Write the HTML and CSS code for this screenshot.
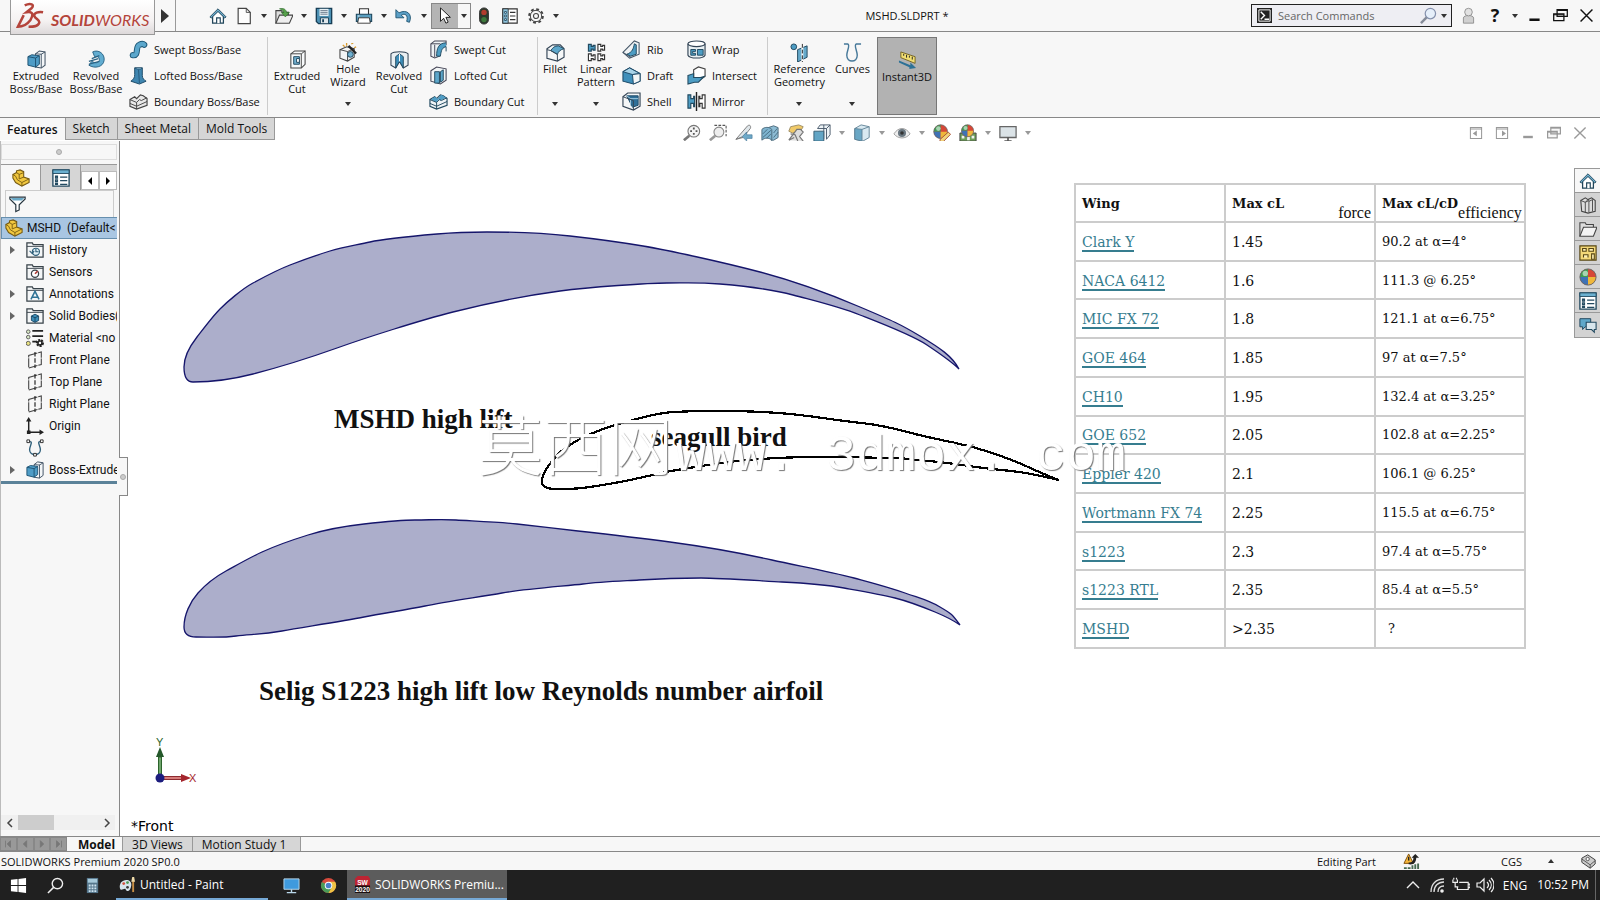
FILE: index.html
```html
<!DOCTYPE html>
<html lang="en">
<head>
<meta charset="utf-8">
<title>MSHD.SLDPRT</title>
<link rel="stylesheet" href="styles.css">
</head>
<body>
<svg class="sprite" aria-hidden="true">
  <symbol id="home" viewBox="0 0 20 20"><path d="M4 10v8h12v-8L10 4z" fill="#fff" stroke="#20455a" stroke-width="1.400"/><path d="M1 11 10 2l9 9-1.500 1.200L10 5l-7.500 7.200z" fill="#6fb0cf" stroke="#20455a"/><path d="M8.500 18v-6h4v6" fill="#fff" stroke="#20455a" stroke-width="1.300"/></symbol>
  <symbol id="new" viewBox="0 0 20 20"><path d="M3.500 1.500h9l4.500 4.500v12.500h-13.500z" fill="#fdfdfd" stroke="#444" stroke-width="1.300"/><path d="M12.500 1.500v4.500h4.500" fill="none" stroke="#444"/></symbol>
  <symbol id="open" viewBox="0 0 20 20"><path d="M1 18V4h6l1.500 2H15v3" fill="#ddd" stroke="#444" stroke-width="1.200"/><path d="M1 18 5 9h15l-4 9z" fill="#eee" stroke="#444" stroke-width="1.200"/><path d="M5 2c4-1 7 0 8 4h3l-4.500 5L7 6h3C9 4 8 3 5 2z" fill="#57a04b" stroke="#2d6a2a" stroke-width=".7"/></symbol>
  <symbol id="save" viewBox="0 0 20 20"><path d="M1.500 1.500h17v17H4l-2.500-2.500z" fill="#4e92b5" stroke="#173d55" stroke-width="1.500"/><path d="M5 2h10v8H5z" fill="#e6f0f5"/><path d="M6 4h8M6 6h8M6 8h8" stroke="#678"/><path d="M6 18v-6h9v6" fill="#dfe6ea" stroke="#173d55"/><path d="M8 13.500h2V17H8z" fill="#173d55"/></symbol>
  <symbol id="print" viewBox="0 0 20 20"><path d="M5 8V2h10v6" fill="#fff" stroke="#333" stroke-width="1.200"/><path d="M1.500 8h17v8h-17z" fill="#5b9fc0" stroke="#1d465d" stroke-width="1.200"/><path d="M4 12h12l1 6H3z" fill="#fff" stroke="#333"/><path d="M3 10h2" stroke="#fff"/></symbol>
  <symbol id="undo" viewBox="0 0 20 20"><path d="M1 3v9h9L7 9c4-2.500 8 0 6 7l3 1C20 8 13 2 4.500 6.500z" fill="#5b9fc6" stroke="#1e526f"/></symbol>
  <symbol id="cursor" viewBox="0 0 20 20"><path d="M5 1v15l3.500-3.500L11 18l2.500-1.200L11 11.500h5z" fill="#fff" stroke="#222" stroke-width="1.100"/></symbol>
  <symbol id="light" viewBox="0 0 20 20"><rect x="5" y="1" width="10" height="18" rx="5" fill="#2d3a2d" stroke="#333"/><circle cx="10" cy="6" r="3" fill="#b23c2d"/><circle cx="10" cy="14" r="3" fill="#3d7a3c"/></symbol>
  <symbol id="options" viewBox="0 0 20 20"><path d="M2 2h16v16H2z" fill="#fff" stroke="#333" stroke-width="1.300"/><path d="M2 2h6v16H2z" fill="#8cc3dc" stroke="#333"/><path d="M4 5h2v2H4zM4 9h2v2H4zM4 13h2v2H4z" fill="#fff" stroke="#24506a"/><path d="M10 6h6M10 10h6M10 14h6" stroke="#333" stroke-width="1.200"/></symbol>
  <symbol id="gear" viewBox="0 0 20 20"><circle cx="10" cy="10" r="7.600" fill="none" stroke="#444" stroke-width="2.200" stroke-dasharray="3.200 2.770"/><circle cx="10" cy="10" r="6.300" fill="#f7f7f7" stroke="#444" stroke-width="1.100"/><circle cx="10" cy="10" r="2.800" fill="none" stroke="#444" stroke-width="1.200"/></symbol>
  <symbol id="extrude" viewBox="0 0 20 20"><path d="M9 4l4-3 6 1v14l-4 3-6-1z" fill="#f3f6f8" stroke="#456" stroke-width="1.100"/><path d="M15 4v15M9 4l6 .5 4-2.500" fill="none" stroke="#456"/><path d="M1 7l4-2 8 1v9l-4 3-8-2z" fill="#4e9cc6" stroke="#1c5070"/><path d="M1 7l8 1.500V18M9 8.500l4-2.500" fill="none" stroke="#1c5070"/></symbol>
  <symbol id="revolve" viewBox="0 0 20 20"><path d="M6 2C12-1 19 4 18 11c-1 7-10 9-16 5l3-4c4 2 7 2 8-1 .5-3-2-5-5-4z" fill="#62add1" stroke="#2a6384"/><path d="M2 12l10-3M2 15l11-3M5 9l8-3" stroke="#2a6384" stroke-width="1.300"/></symbol>
  <symbol id="swept" viewBox="0 0 20 20"><path d="M4 16c7 1 2-9 7-11 2-1 4-1 5 0" fill="none" stroke="#1e5877" stroke-width="6.500" stroke-linecap="round"/><path d="M4 16c7 1 2-9 7-11 2-1 4-1 5 0" fill="none" stroke="#5ba7cc" stroke-width="4.500" stroke-linecap="round"/></symbol>
  <symbol id="loft" viewBox="0 0 20 20"><path d="M6 2h8v8c0 3 2 5 4 6l-7 3-9-3c3-2 4-4 4-7z" fill="#3f86b0" stroke="#1c4966"/><path d="M6 2l3 1.500h3L14 2zM10 4l1 14" fill="#92c4de" stroke="#1c4966" stroke-width=".7"/></symbol>
  <symbol id="boundary" viewBox="0 0 20 20"><path d="M1 8l5-3 2 2 4-4 3 1 4 3v7L8 18l-7-3z" fill="#e8e8e8" stroke="#444" stroke-width="1.200"/><path d="M1 8l7 3 3-3 2 1 6-3M8 11v7M1 12l7 3 11-5" fill="none" stroke="#444"/></symbol>
  <symbol id="boundcut" viewBox="0 0 20 20"><path d="M1 8l5-3 2 2 4-4 3 1 4 3v7L8 18l-7-3z" fill="#eef3f6" stroke="#234a60" stroke-width="1.200"/><path d="M2 8l4-3 3 2 4-4 5 3-6 3-2-1-2 3z" fill="#4f9dc5"/><path d="M1 8l7 3 3-3 2 1 6-3M8 11v7M1 12l7 3 11-5" fill="none" stroke="#234a60"/></symbol>
  <symbol id="excut" viewBox="0 0 20 20"><path d="M3 4l4-3h11v14l-4 4H3z" fill="#f8fafb" stroke="#444" stroke-width="1.100"/><path d="M3 4h11v15M14 4l4-3" fill="none" stroke="#444"/><path d="M6 7h6v8H6z" fill="#71b0d0" stroke="#234a60"/><path d="M9 9h3v4H9z" fill="#fff" stroke="#234a60"/></symbol>
  <symbol id="hole" viewBox="0 0 20 20"><path d="M1 7l7-3 8 2v9l-7 4-8-3z" fill="#f2f4f5" stroke="#444" stroke-width="1.100"/><path d="M1 7l8 2v10M9 9l7-3" fill="none" stroke="#444"/><circle cx="12" cy="12" r="3" fill="#6fb0d0" stroke="#234a60"/><path d="M10 3l8 8" stroke="#222" stroke-width="2.400"/><path d="M4 2l2 2M8 0v3M13 1l2-1M18 4l-2 1" stroke="#d89b2e" stroke-width="1.400"/></symbol>
  <symbol id="revcut" viewBox="0 0 20 20"><path d="M1 4c3-3 15-3 18 0v12l-5 3-4-7-4 7-5-3z" fill="#e9eff2" stroke="#345" stroke-width="1.100"/><path d="M6 19V7l4-3 4 3v12l-4-7z" fill="#3f8fba" stroke="#234a60"/><path d="M10 4v8" stroke="#fff"/></symbol>
  <symbol id="sweepcut" viewBox="0 0 20 20"><path d="M2 4l4-3h12v4c-5 1-7 5-7 12l-5 2-4-2z" fill="#eef2f4" stroke="#445" stroke-width="1.100"/><path d="M18 3c-8 0-10 6-10 14h4c1-7 2-9 6-10v5" fill="#4d9dc4" stroke="#234a60"/><path d="M2 4h10M6 5v13" stroke="#445"/></symbol>
  <symbol id="loftcut" viewBox="0 0 20 20"><path d="M2 5l6-4 10 2v12l-6 4-10-3z" fill="#f2f5f6" stroke="#445" stroke-width="1.100"/><path d="M6 6h5v12H6zM12 6l3-2v11l-3 2z" fill="#5ca7cb" stroke="#234a60"/></symbol>
  <symbol id="fillet" viewBox="0 0 20 20"><path d="M1 6l6-4h8l4 4v9l-7 4-11-3z" fill="#f5f7f8" stroke="#345" stroke-width="1.200"/><path d="M5 8c2-3 4-5 8-5l6 3c-4 1-6 3-7 6z" fill="#5da7cb" stroke="#234a60"/><path d="M1 7l4 1 7 4v7" fill="none" stroke="#345"/></symbol>
  <symbol id="pattern" viewBox="0 0 20 20"><path d="M1.500 1.500h3v2h2v-1h2v5h-2v-1h-2v2h-3z" fill="#4d9dc4" stroke="#234a60" stroke-width="1.200"/><path d="M11.500 1.500h3v2h2v-1h2v5h-2v-1h-2v2h-3zM1.500 11.500h3v2h2v-1h2v5h-2v-1h-2v2h-3zM11.500 11.500h3v2h2v-1h2v5h-2v-1h-2v2h-3z" fill="#fff" stroke="#333" stroke-width="1.200"/></symbol>
  <symbol id="rib" viewBox="0 0 20 20"><path d="M1 13L13 1l5 2v12l-10 4z" fill="#f0f3f5" stroke="#456" stroke-width="1.100"/><path d="M5 15C11 13 12 9 13 4l2 1v10l-6 2z" fill="#4d9dc4" stroke="#234a60"/><path d="M1 13l8 5" stroke="#456"/></symbol>
  <symbol id="draft" viewBox="0 0 20 20"><path d="M1 6l7-4 11 6v8l-7 3-11-3z" fill="#3f8fba" stroke="#1c4966" stroke-width="1.100"/><path d="M1 6l10 3 8-1L8 2z" fill="#a8d3e8" stroke="#1c4966"/><path d="M11 9l8-1v8l-7 3z" fill="#f3f6f7" stroke="#1c4966"/></symbol>
  <symbol id="shell" viewBox="0 0 20 20"><path d="M1 5l5-4h13v14l-7 4-11-4z" fill="#f4f6f7" stroke="#345" stroke-width="1.200"/><path d="M5 4h12v10l-6 2z" fill="#2f7099" stroke="#1c4966"/><path d="M5 4l4 3v7l2 2M9 7h8" fill="none" stroke="#a4cce0"/><path d="M1 5l11 4v10" fill="none" stroke="#345"/></symbol>
  <symbol id="wrap" viewBox="0 0 20 20"><path d="M1 4v12c2 4 16 4 18 0V4" fill="#e9f0f3" stroke="#345" stroke-width="1.200"/><ellipse cx="10" cy="4" rx="9" ry="3" fill="#fff" stroke="#345" stroke-width="1.200"/><path d="M4 10h5v2H6v2h3v2H4zM11 10h6v6h-6z" fill="#4d9dc4" stroke="#234a60"/></symbol>
  <symbol id="intersect" viewBox="0 0 20 20"><path d="M7 4l5-3 7 2v8l-5 3-7-2z" fill="#fff" stroke="#444" stroke-width="1.200"/><path d="M1 10l6-2v4h7l4-1-6 6H8l-7 2z" fill="#4d9dc4" stroke="#234a60" stroke-width="1.100"/></symbol>
  <symbol id="mirror" viewBox="0 0 20 20"><path d="M1 3h3v4h3V4.500h1v11H7V12H4v5H1z" fill="#4d9dc4" stroke="#234a60" stroke-width="1.200"/><path d="M10 0v20" stroke="#222" stroke-width="1.500"/><path d="M19 3h-3v4h-2.500V4.500h-1v11h1V12H16v5h3z" fill="#fff" stroke="#333" stroke-width="1.200"/></symbol>
  <symbol id="refgeo" viewBox="0 0 20 20"><circle cx="4" cy="4" r="3" fill="#4d9dc4" stroke="#234a60"/><path d="M8 7l10-4v12l-10 5z" fill="#66aacb" stroke="#234a60"/><path d="M13 1v19" stroke="#fff" stroke-width="2"/><path d="M13 1v19" stroke="#222" stroke-dasharray="4 2"/></symbol>
  <symbol id="curves" viewBox="0 0 20 20"><path d="M1 1h4c3 1-1 7-1 12 0 8 11 8 11 0 0-5-4-11-1-12h5" fill="none" stroke="#47799a" stroke-width="1.500"/></symbol>
  <symbol id="instant" viewBox="0 0 20 20"><path d="M3 1l15 5v7L3 7z" fill="#f2de72" stroke="#766525"/><path d="M6 3v2M9 4v3M12 5v2M15 6v3" stroke="#222"/><path d="M1 10l12 5v-3l6 6-7 1v-2L1 12z" fill="#2d7196"/></symbol>
  <symbol id="zoomfit" viewBox="0 0 20 20"><circle cx="12" cy="8" r="6.500" fill="#f4f4f4" stroke="#777" stroke-width="1.200"/><path d="M7 13l-6 5" stroke="#777" stroke-width="3"/><path d="M12 4v2M12 10v2M8 8h2M14 8h2" stroke="#555" stroke-width="2"/></symbol>
  <symbol id="zoomarea" viewBox="0 0 20 20"><path d="M6 1.500h13v12" fill="none" stroke="#555" stroke-dasharray="3 1.500" stroke-width="1.200"/><circle cx="11" cy="9" r="5.500" fill="#eee" stroke="#888" stroke-width="1.200"/><path d="M7 13l-6 5" stroke="#999" stroke-width="3"/></symbol>
  <symbol id="prev" viewBox="0 0 20 20"><path d="M1 17L14 2c3-2 4 1 3 3L9 15z" fill="#dfe6ea" stroke="#777"/><path d="M1 17l8-3 4-5" fill="none" stroke="#777"/><path d="M8 14l5-5v3h6v4h-6v3z" fill="#6da9c8" stroke="#47799a" stroke-width=".7"/></symbol>
  <symbol id="section" viewBox="0 0 20 20"><path d="M8 4l6-2 5 2v11l-5 3h-3" fill="#8dbcd4" stroke="#4b6878"/><path d="M1 6c3-3 8-3 11 0v12c-3-3-8-3-11 0z" fill="#7fb4cf" stroke="#4b6878"/><path d="M2 15l9-8M2 11l5-5M6 16l5-5M14 15l5-6M14 10l4-5" stroke="#35566a" stroke-width=".8"/></symbol>
  <symbol id="dynview" viewBox="0 0 20 20"><path d="M4 3l9-2 5 2-3 5-9 2-4-2z" fill="#f1ca68" stroke="#9a8a62"/><path d="M2 18L11 6h4l3 3-4 5 4 5M4 11l5 1 3 7M2 18l6-3" fill="#ddd" stroke="#777" stroke-width="1.300"/></symbol>
  <symbol id="orient" viewBox="0 0 20 20"><path d="M5 5h10v12M5 5l3-4h11v11l-4 5M15 5l4-4M12 1v16" fill="#eef4f7" stroke="#456"/><path d="M1 8h11v11H1z" fill="#62a5c5" stroke="#365b70"/></symbol>
  <symbol id="cube" viewBox="0 0 20 20"><path d="M2 5l7-4 9 2v12l-7 4-9-2z" fill="#d8e9f1" stroke="#5e8094"/><path d="M2 5l8 1v13l-8-2z" fill="#69a7c5" stroke="#5e8094"/><path d="M10 6l8-3" stroke="#5e8094"/></symbol>
  <symbol id="eye" viewBox="0 0 20 20"><path d="M1 11c5-8 13-8 18 0-5 6-13 6-18 0z" fill="#eee" stroke="#999"/><circle cx="10" cy="10" r="4.500" fill="#6a7780"/><circle cx="10" cy="10" r="2" fill="#333"/></symbol>
  <symbol id="ball" viewBox="0 0 20 20"><circle cx="10" cy="10" r="9" fill="#d64737"/><path d="M10 10V1a9 9 0 0 0-9 9z" fill="#3f9d54"/><path d="M10 10H1a9 9 0 0 0 9 9z" fill="#3f72b5"/><path d="M10 10v9a9 9 0 0 0 9-9z" fill="#efb73b"/><circle cx="10" cy="10" r="9" fill="none" stroke="#666"/><circle cx="7" cy="6" r="3" fill="#fff" opacity=".55"/></symbol>
  <symbol id="appear" viewBox="0 0 20 20"><use href="#ball" width="17" height="17"/><path d="M8 17l9-8 2.500 2.500-8 8-4 .5z" fill="#f1d47a" stroke="#a54b32"/></symbol>
  <symbol id="scene" viewBox="0 0 20 20"><path d="M1 10h18v9H1z" fill="#6b9d56" stroke="#444"/><path d="M3 13h3v3H3zM9 14h3v4H9zM14 13h3v3h-3z" fill="#eee"/><use href="#ball" x="2" width="15" height="15"/></symbol>
  <symbol id="screen" viewBox="0 0 20 20"><path d="M1 3h18v12H1z" fill="#dbe3e7" stroke="#666" stroke-width="1.400"/><path d="M10 15v3M6 19h8" stroke="#555" stroke-width="1.800"/></symbol>
  <symbol id="part" viewBox="0 0 20 20"><path d="M1 6l4-2v-2l4-1 4 2v6l6 2v4l-8 4-7-4-3-5z" fill="#f2c83f" stroke="#765b13" stroke-width="1.200"/><path d="M1 6l3 2 2 4 5 3 8-4M5 4l3 2 5-2M8 6v5l5-2M11 15v4" fill="none" stroke="#765b13"/></symbol>
  <symbol id="props" viewBox="0 0 20 20"><path d="M1 1h18v18H1z" fill="#fff" stroke="#234a60" stroke-width="1.500"/><path d="M1 1h18v4H1z" fill="#6bb0d0" stroke="#234a60"/><path d="M4 8h2v2H4zM4 12h2v2H4zM4 16h2v1H4z" fill="none" stroke="#234a60" stroke-width="1.500"/><path d="M9 9h8M9 13h8M9 17h8" stroke="#234a60" stroke-width="1.400"/></symbol>
  <symbol id="filter" viewBox="0 0 20 20"><path d="M1 2h18v2l-7 7v6l-4 2v-8L1 4z" fill="#fff" stroke="#26353f" stroke-width="1.400"/><path d="M2 3h16l-3 3H5z" fill="#6aa9c7"/></symbol>
  <symbol id="folder" viewBox="0 0 20 20"><path d="M1 18V2h6l1 2h11v14z" fill="#f4f6f7" stroke="#39434a" stroke-width="1.400"/><path d="M1 6h18" stroke="#39434a"/></symbol>
  <symbol id="history" viewBox="0 0 20 20"><use href="#folder"/><circle cx="11" cy="12" r="4" fill="#e2f0f7" stroke="#2d5d78" stroke-width="1.200"/><path d="M11 9v3h3M4 11l3 3 2-3" fill="none" stroke="#2d5d78" stroke-width="1.200"/></symbol>
  <symbol id="sensor" viewBox="0 0 20 20"><use href="#folder"/><circle cx="10" cy="12" r="4" fill="#fff" stroke="#39434a" stroke-width="1.400"/><path d="M10 12l3-3" stroke="#b13b35" stroke-width="1.700"/></symbol>
  <symbol id="annot" viewBox="0 0 20 20"><use href="#folder"/><path d="M5.500 16L10 7l4.500 9M7 13.500h6" fill="none" stroke="#2f7396" stroke-width="1.700"/></symbol>
  <symbol id="bodies" viewBox="0 0 20 20"><use href="#folder"/><path d="M6 10l4-2 4 2v5l-4 2-4-2z" fill="#3c8db7" stroke="#194663"/><path d="M6 10l4 2 4-2M10 12v5" fill="none" stroke="#194663"/></symbol>
  <symbol id="material" viewBox="0 0 20 20"><g fill="#d8e8c5" stroke="#555"><circle cx="2.500" cy="3" r="2"/><circle cx="2.500" cy="9" r="2"/><circle cx="2.500" cy="16" r="2.300" fill="#e9e27f"/></g><path d="M7 2h12M7 8h12M7 14h5" stroke="#222" stroke-width="2"/><circle cx="15.500" cy="15.500" r="3" fill="none" stroke="#222" stroke-width="3" stroke-dasharray="2 1"/><circle cx="15.500" cy="15.500" r="2.300" fill="none" stroke="#222" stroke-width="1.600"/></symbol>
  <symbol id="plane" viewBox="0 0 20 20"><path d="M3 5l14-4v14L3 19z" fill="none" stroke="#444" stroke-width="1.200" stroke-dasharray="10 1"/><path d="M10 1v18" stroke="#222" stroke-width="1.300" stroke-dasharray="5 2"/></symbol>
  <symbol id="origin" viewBox="0 0 20 20"><path d="M3 17V4M3 17h14" stroke="#222" stroke-width="1.600"/><path d="M3 0l3 5H0zM20 17l-5-3v6zM1 15h4v4H1z" fill="#222"/></symbol>
  <symbol id="sketch" viewBox="0 0 20 20"><path d="M3 3c6-1 1 4 1 9 0 7 12 7 12 0 0-5-5-10 1-9" fill="none" stroke="#31617c" stroke-width="1.500"/><path d="M1 1h3v3H1zM16 1h3v3h-3zM8.500 16h3v3h-3z" fill="#fff" stroke="#222"/></symbol>
  <symbol id="library" viewBox="0 0 20 20"><path d="M2 5l5-3 3 2 4-2 4 3v12l-8 2-7-2z" fill="#ddd" stroke="#444" stroke-width="1.200"/><path d="M2 5l5 2 3-3M7 7v11M7 7l4-2M11 5v13M11 6l4-2M15 4v13" fill="none" stroke="#444"/></symbol>
  <symbol id="folder2" viewBox="0 0 20 20"><path d="M1 18V3h6l1 2h8v3" fill="#ddd" stroke="#444" stroke-width="1.200"/><path d="M1 18L5 8h15l-4 10z" fill="#f4f4f4" stroke="#444" stroke-width="1.200"/></symbol>
  <symbol id="palette" viewBox="0 0 20 20"><path d="M1 2h18v16H1z" fill="#f3d878" stroke="#554514" stroke-width="1.300"/><path d="M4 5h4v3H4zM11 5h5v3h-5zM5 15v-3h5v3M14 11h3v6h-3z" fill="#fff1b5" stroke="#554514" stroke-width="1.200"/></symbol>
  <symbol id="forum" viewBox="0 0 20 20"><path d="M1 3h12v9H7l-3 3v-3H1z" fill="#5fa8ca" stroke="#234a60" stroke-width="1.100"/><path d="M8 7h11v8h-2v3l-3-3H8z" fill="#d8e6ed" stroke="#234a60" stroke-width="1.200"/></symbol>
  <symbol id="restore" viewBox="0 0 20 20"><path d="M6 3h12v8H6zM2 8h12v8H2z" fill="#f7f7f7" stroke="currentColor" stroke-width="1.500"/><path d="M6 4h12M2 9h12" stroke="currentColor" stroke-width="1.200"/></symbol>
  <symbol id="close" viewBox="0 0 20 20"><path d="M3 3l14 14M17 3L3 17" stroke="currentColor" stroke-width="1.700"/></symbol>
  <symbol id="min" viewBox="0 0 20 20"><path d="M4 15h12" stroke="currentColor" stroke-width="3"/></symbol>
</svg>

<div class="app">
  <header class="titlebar">
    <div class="logo">
      <svg class="logo-mark" viewBox="0 0 30 30" aria-hidden="true"><path d="M9 3c6-3 11-1 7 3l-5 4c7-1 7 3 4 8-3 4-7 7-13 7l6-12M28 10c-5-1-10 1-9 4 1 3 6 4 5 7-1 4-6 4-11 4" fill="none" stroke="#b4443b" stroke-width="2.600"/></svg>
      <span class="logo-text"><b>SOLID</b>WORKS</span>
    </div>
    <button class="expand" aria-label="Show menus"><svg viewBox="0 0 8 14"><path d="M0 0l8 7-8 7z" fill="#333"/></svg></button>
    <nav class="quick" aria-label="Quick access">
      <button class="tool" aria-label="Home"><svg><use href="#home"/></svg></button>
      <button class="tool" aria-label="New"><svg><use href="#new"/></svg></button><button class="drop" aria-label="New options"></button>
      <button class="tool" aria-label="Open"><svg><use href="#open"/></svg></button><button class="drop" aria-label="Open options"></button>
      <button class="tool" aria-label="Save"><svg><use href="#save"/></svg></button><button class="drop" aria-label="Save options"></button>
      <button class="tool" aria-label="Print"><svg><use href="#print"/></svg></button><button class="drop" aria-label="Print options"></button>
      <button class="tool" aria-label="Undo"><svg><use href="#undo"/></svg></button><button class="drop" aria-label="Undo options"></button>
      <span class="split"><button class="tool pressed" aria-label="Select"><svg><use href="#cursor"/></svg></button><button class="drop" aria-label="Select options"></button></span>
      <button class="tool" aria-label="Rebuild"><svg><use href="#light"/></svg></button>
      <button class="tool" aria-label="File properties"><svg><use href="#options"/></svg></button>
      <button class="tool" aria-label="Options"><svg><use href="#gear"/></svg></button><button class="drop" aria-label="More options"></button>
    </nav>
    <h1 class="doc-title">MSHD.SLDPRT *</h1>
    <div class="search">
      <svg class="prompt" viewBox="0 0 16 16"><path d="M0 0h16v16H0z" fill="#222"/><path d="M2 2h12v12H2z" fill="none" stroke="#fff"/><path d="M4 4l4 4-4 4M8 12h5" fill="none" stroke="#fff" stroke-width="1.500"/></svg>
      <input type="text" placeholder="Search Commands" aria-label="Search Commands">
      <svg class="lens" viewBox="0 0 18 18"><circle cx="11" cy="7" r="5.500" fill="#e6effa" stroke="#8591ad" stroke-width="1.300"/><path d="M7 11l-6 6" stroke="#858b98" stroke-width="2.600"/></svg>
      <button class="drop" aria-label="Search scope"></button>
    </div>
    <div class="window-tools">
      <button class="tool" aria-label="Account"><svg viewBox="0 0 20 20"><path d="M4 19v-6c0-4 12-4 12 0v6z" fill="#d0d0d0" stroke="#888"/><circle cx="10" cy="6" r="4.500" fill="#e2e2e2" stroke="#888"/></svg></button>
      <button class="tool help">?</button><button class="drop" aria-label="Help options"></button>
      <button class="tool" aria-label="Minimize"><svg><use href="#min"/></svg></button>
      <button class="tool" aria-label="Restore"><svg><use href="#restore"/></svg></button>
      <button class="tool" aria-label="Close"><svg><use href="#close"/></svg></button>
    </div>
  </header>

  <div class="ribbon">
    <section class="group boss">
      <button class="big low w60"><svg><use href="#extrude"/></svg>Extruded Boss/Base</button>
      <button class="big low w60"><svg><use href="#revolve"/></svg>Revolved Boss/Base</button>
      <div class="stack">
        <button><svg><use href="#swept"/></svg>Swept Boss/Base</button>
        <button><svg><use href="#loft"/></svg>Lofted Boss/Base</button>
        <button><svg><use href="#boundary"/></svg>Boundary Boss/Base</button>
      </div>
    </section>
    <section class="group cuts">
      <button class="big low w54"><svg><use href="#excut"/></svg>Extruded Cut</button>
      <button class="big w48"><svg><use href="#hole"/></svg>Hole Wizard<i class="caret"></i></button>
      <button class="big low w54"><svg><use href="#revcut"/></svg>Revolved Cut</button>
      <div class="stack">
        <button><svg><use href="#sweepcut"/></svg>Swept Cut</button>
        <button><svg><use href="#loftcut"/></svg>Lofted Cut</button>
        <button><svg><use href="#boundcut"/></svg>Boundary Cut</button>
      </div>
    </section>
    <section class="group mods">
      <button class="big w34"><svg><use href="#fillet"/></svg>Fillet<i class="caret"></i></button>
      <button class="big w48"><svg><use href="#pattern"/></svg>Linear Pattern<i class="caret"></i></button>
      <div class="stack narrow">
        <button><svg><use href="#rib"/></svg>Rib</button>
        <button><svg><use href="#draft"/></svg>Draft</button>
        <button><svg><use href="#shell"/></svg>Shell</button>
      </div>
      <div class="stack">
        <button><svg><use href="#wrap"/></svg>Wrap</button>
        <button><svg><use href="#intersect"/></svg>Intersect</button>
        <button><svg><use href="#mirror"/></svg>Mirror</button>
      </div>
    </section>
    <section class="group refs">
      <button class="big w60"><svg><use href="#refgeo"/></svg>Reference Geometry<i class="caret"></i></button>
      <button class="big w48"><svg><use href="#curves"/></svg>Curves<i class="caret"></i></button>
    </section>
    <button class="big low instant w60"><svg><use href="#instant"/></svg>Instant3D</button>
  </div>

  <div class="strip">
    <nav class="tabs">
      <button class="tab active">Features</button><button class="tab">Sketch</button><button class="tab">Sheet Metal</button><button class="tab">Mold Tools</button>
    </nav>
    <div class="viewbar">
      <button class="tool" aria-label="Zoom to fit"><svg><use href="#zoomfit"/></svg></button>
      <button class="tool" aria-label="Zoom to area"><svg><use href="#zoomarea"/></svg></button>
      <button class="tool" aria-label="Previous view"><svg><use href="#prev"/></svg></button>
      <button class="tool" aria-label="Section view"><svg><use href="#section"/></svg></button>
      <button class="tool" aria-label="Dynamic annotation views"><svg><use href="#dynview"/></svg></button>
      <button class="tool" aria-label="View orientation"><svg><use href="#orient"/></svg></button><button class="drop" aria-label="Orientations"></button>
      <button class="tool" aria-label="Display style"><svg><use href="#cube"/></svg></button><button class="drop" aria-label="Display styles"></button>
      <button class="tool" aria-label="Hide or show items"><svg><use href="#eye"/></svg></button><button class="drop" aria-label="Item types"></button>
      <button class="tool" aria-label="Edit appearance"><svg><use href="#appear"/></svg></button>
      <button class="tool" aria-label="Apply scene"><svg><use href="#scene"/></svg></button><button class="drop" aria-label="Scenes"></button>
      <button class="tool" aria-label="View settings"><svg><use href="#screen"/></svg></button><button class="drop" aria-label="Settings list"></button>
    </div>
    <div class="doc-tools">
      <button class="tool" aria-label="Collapse left"><svg viewBox="0 0 20 20"><path d="M3 3h14v14H3zM3 5h14" fill="none" stroke="currentColor" stroke-width="1.300"/><path d="M11 7v7l-5-3.500z" fill="currentColor"/></svg></button>
      <button class="tool" aria-label="Collapse right"><svg viewBox="0 0 20 20"><path d="M3 3h14v14H3zM3 5h14" fill="none" stroke="currentColor" stroke-width="1.300"/><path d="M10 7v7l5-3.500z" fill="currentColor"/></svg></button>
      <button class="tool" aria-label="Minimize document"><svg><use href="#min"/></svg></button>
      <button class="tool" aria-label="Restore document"><svg><use href="#restore"/></svg></button>
      <button class="tool" aria-label="Close document"><svg><use href="#close"/></svg></button>
    </div>
  </div>

  <main class="work">
    <aside class="panel">
      <div class="grip"><i></i></div>
      <div class="ptabs">
        <button class="ptab active" aria-label="Feature tree"><svg><use href="#part"/></svg></button>
        <button class="ptab" aria-label="Properties"><svg><use href="#props"/></svg></button>
        <span class="spin"><button aria-label="Previous tab"><svg viewBox="0 0 6 8"><path d="M5 0v8L1 4z"/></svg></button><button aria-label="Next tab"><svg viewBox="0 0 6 8"><path d="M1 0v8l4-4z"/></svg></button></span>
      </div>
      <button class="filter" aria-label="Filter"><svg><use href="#filter"/></svg></button>
      <ul class="tree">
        <li class="root"><svg><use href="#part"/></svg><span>MSHD&nbsp; (Default&lt;</span></li>
        <li class="more"><svg><use href="#history"/></svg><span>History</span></li>
        <li><svg><use href="#sensor"/></svg><span>Sensors</span></li>
        <li class="more"><svg><use href="#annot"/></svg><span>Annotations</span></li>
        <li class="more"><svg><use href="#bodies"/></svg><span>Solid Bodies(</span></li>
        <li><svg><use href="#material"/></svg><span>Material &lt;no</span></li>
        <li><svg><use href="#plane"/></svg><span>Front Plane</span></li>
        <li><svg><use href="#plane"/></svg><span>Top Plane</span></li>
        <li><svg><use href="#plane"/></svg><span>Right Plane</span></li>
        <li><svg><use href="#origin"/></svg><span>Origin</span></li>
        <li><svg><use href="#sketch"/></svg></li>
        <li class="more"><svg><use href="#extrude"/></svg><span>Boss-Extrude</span></li>
      </ul>
      <div class="hscroll"><button aria-label="Scroll left"><svg viewBox="0 0 8 10"><path d="M6 1L2 5l4 4"/></svg></button><i class="thumb"></i><button aria-label="Scroll right"><svg viewBox="0 0 8 10"><path d="M2 1l4 4-4 4"/></svg></button></div>
      <div class="flyout"><i></i></div>
    </aside>

    <div class="canvas">
      <svg class="model" viewBox="120 141 1480 695" preserveAspectRatio="xMinYMin meet">
        <g class="foil">
          <path d="M184 367C184 356 190 346 197 337S213 316 220 309S242 289 253 283S277 270 290 265S317 255 330 251S357 245 370 242S414 236 437 234S470 232 487 232S543 233 570 236S619 242 643 246S722 262 760 272S827 293 860 307S900 324 920 336S952 356 959 369C952 362 942 355 927 345S883 324 860 315S815 301 793 295S744 286 720 284S685 283 667 283S590 287 560 291S485 304 453 312S365 338 337 348S280 367 253 374S210 382 193 382C187 382 184 378 184 367Z"/>
          <path d="M184 627C184 615 190 602 198 593S215 577 226 571S249 558 262 552S292 540 308 535S346 526 364 524S400 520 415 520S440 519 456 520S500 522 517 524S560 529 578 531S640 538 670 542S745 554 772 560S828 571 854 578S888 587 905 593S928 600 940 607S952 614 960 625C953 620 947 617 935 612S911 602 895 598S861 591 844 588S802 583 782 582S720 578 701 578S655 579 639 580S600 582 583 584S525 589 502 593S445 602 425 606S385 613 364 617S305 627 282 631S250 634 236 636S210 637 196 637C187 637 184 633 184 627Z"/>
        </g>
        <path class="gull" d="M542 480C543 474 545 470 549 465S557 454 564 449S577 440 586 436S602 429 612 426S625 422 633 420S650 415 664 413S700 411 720 411S770 412 790 414S823 418 837 420S864 423 876 425S900 430 915 434S958 443 976 448S1005 457 1019 463S1045 475 1059 480C1045 477 1034 474 1019 472S990 469 976 467S942 462 928 461S905 458 894 458S853 457 833 457S795 457 777 458S745 460 729 462S695 467 677 470S645 477 625 481S602 485 590 487S574 489 564 489S540 490 542 480Z"/>
        <g class="caption">
          <text x="334" y="428">MSHD high lift</text>
          <text x="651" y="446">seagull bird</text>
          <text x="259" y="700">Selig S1223 high lift low Reynolds number airfoil</text>
        </g>
        <g class="triad">
          <path d="M158.500 757h3v19h-3z" fill="#6fa56c" stroke="#2c632b"/><path d="M160 747l4 10h-8z" fill="#24582a"/>
          <path d="M163 776.500h19v3h-19z" fill="#d67c7a" stroke="#8d2b30"/><path d="M191 778l-10-4v8z" fill="#a4252d"/>
          <circle cx="160" cy="778" r="4.500" fill="#1c1c7e"/>
          <text x="156" y="746" fill="#2c632b">Y</text><text x="189" y="782" fill="#a4252d">X</text>
        </g>
        <text class="view-name" x="131" y="831">*Front</text>
      </svg>

      <table class="wings">
        <thead><tr><th>Wing</th><th><div class="head">Max cL<span>force</span></div></th><th><div class="head">Max cL/cD<span>efficiency</span></div></th></tr></thead>
        <tbody>
          <tr><td><a href="#clark-y">Clark Y</a></td><td>1.45</td><td>90.2 at α=4°</td></tr>
          <tr><td><a href="#naca-6412">NACA 6412</a></td><td>1.6</td><td>111.3 @ 6.25°</td></tr>
          <tr><td><a href="#mic-fx-72">MIC FX 72</a></td><td>1.8</td><td>121.1 at α=6.75°</td></tr>
          <tr><td><a href="#goe-464">GOE 464</a></td><td>1.85</td><td>97 at α=7.5°</td></tr>
          <tr><td><a href="#ch10">CH10</a></td><td>1.95</td><td>132.4 at α=3.25°</td></tr>
          <tr><td><a href="#goe-652">GOE 652</a></td><td>2.05</td><td>102.8 at α=2.25°</td></tr>
          <tr><td><a href="#eppler-420">Eppler 420</a></td><td>2.1</td><td>106.1 @ 6.25°</td></tr>
          <tr><td><a href="#wortmann-fx-74">Wortmann FX 74</a></td><td>2.25</td><td>115.5 at α=6.75°</td></tr>
          <tr><td><a href="#s1223">s1223</a></td><td>2.3</td><td>97.4 at α=5.75°</td></tr>
          <tr><td><a href="#s1223-rtl">s1223 RTL</a></td><td>2.35</td><td>85.4 at α=5.5°</td></tr>
          <tr><td><a href="#mshd">MSHD</a></td><td>&gt;2.35</td><td class="unknown">?</td></tr>
        </tbody>
      </table>

      <div class="watermark"><span class="wm-han">莫西网</span><span class="wm-url">www. 3dmox. com</span></div>

      <nav class="taskpane" aria-label="Task pane">
        <button class="on" aria-label="Resources"><svg><use href="#home"/></svg></button>
        <button aria-label="Design library"><svg><use href="#library"/></svg></button>
        <button aria-label="File explorer"><svg><use href="#folder2"/></svg></button>
        <button aria-label="View palette"><svg><use href="#palette"/></svg></button>
        <button aria-label="Appearances"><svg><use href="#ball"/></svg></button>
        <button aria-label="Custom properties"><svg><use href="#props"/></svg></button>
        <button aria-label="Forum"><svg><use href="#forum"/></svg></button>
      </nav>
    </div>
  </main>

  <nav class="sheets">
    <span class="steps"><button aria-label="First"><svg viewBox="0 0 12 12"><path d="M3 2v8M9 2v8L5 6z"/></svg></button><button aria-label="Previous"><svg viewBox="0 0 12 12"><path d="M8 2v8L4 6z"/></svg></button><button aria-label="Next"><svg viewBox="0 0 12 12"><path d="M4 2v8l4-4z"/></svg></button><button aria-label="Last"><svg viewBox="0 0 12 12"><path d="M9 2v8M3 2v8l4-4z"/></svg></button></span>
    <button class="sheet active">Model</button><button class="sheet">3D Views</button><button class="sheet wide">Motion Study 1</button>
  </nav>

  <footer class="status">
    <span>SOLIDWORKS Premium 2020 SP0.0</span>
    <span class="editing">Editing Part</span>
    <svg class="warn" viewBox="0 0 18 18"><path d="M1 11L6 1l5 10z" fill="#f5b73a" stroke="#80500a"/><path d="M6 4v4" stroke="#222" stroke-width="1.500"/><path d="M6 12c6 1 8-3 8-7h3l-4-4-4 4h2c0 3-1 5-5 5z" fill="#222"/><path d="M1 16h3M5 16h3M10 13v4M13 12v5M16 11v6" stroke="#486b52" stroke-width="2"/></svg>
    <button class="units">CGS<i class="caret up"></i></button>
    <svg class="tag" viewBox="0 0 18 18"><path d="M1 5l7-4 9 6v5l-6 5L1 10z" fill="#ccc" stroke="#444" stroke-width="1.200"/><path d="M1 6l10 7 6-5M11 13v4" fill="none" stroke="#444"/><circle cx="8" cy="6" r="2" fill="#fff" stroke="#444"/></svg>
  </footer>

  <div class="taskbar">
    <button class="app-icon" aria-label="Start"><svg viewBox="0 0 18 18"><path d="M1 3l7-1v6.500H1zM9 2l8-1v7.500H9zM1 9.500h7V16l-7-1zM9 9.500h8V17l-8-1z" fill="#fff"/></svg></button>
    <button class="app-icon" aria-label="Search"><svg viewBox="0 0 18 18"><circle cx="11" cy="7" r="5.500" fill="none" stroke="#eee" stroke-width="1.500"/><path d="M7 11l-6 6" stroke="#eee" stroke-width="1.600"/></svg></button>
    <button class="app-icon" aria-label="Calculator"><svg viewBox="0 0 18 18"><path d="M3 1h12v16H3z" fill="#56778c"/><path d="M4 2h10v4H4z" fill="#a6c9da"/><path d="M5 9h8M5 12h8M5 15h8" stroke="#cfe5f1" stroke-width="2" stroke-dasharray="2 1"/></svg></button>
    <button class="task paint"><svg viewBox="0 0 18 18"><path d="M2 7c4-5 12-3 11 3-1 7-5 7-6 4-1-2-5 3-6-1-.5-2 0-4 1-6z" fill="#d7e5ed"/><circle cx="5" cy="8" r="1.500" fill="#d0503d"/><circle cx="9" cy="7" r="1.500" fill="#4a9a55"/><circle cx="9" cy="12" r="1.500" fill="#3a3a3a"/><path d="M15 5v12" stroke="#c98f45" stroke-width="2"/><path d="M13 6l1-5h2l1 5z" fill="#efdba9"/></svg>Untitled - Paint</button>
    <button class="app-icon" aria-label="This PC"><svg viewBox="0 0 18 18"><path d="M1 2h16v11H1z" fill="#3f9ade" stroke="#b9d7ea"/><path d="M9 13v3M4 16.500h10" stroke="#b9d7ea" stroke-width="1.500"/></svg></button>
    <button class="app-icon" aria-label="Chrome"><svg viewBox="0 0 18 18"><circle cx="9" cy="9" r="8" fill="#d94b3d"/><path d="M9 9L2 5.200A8 8 0 0 0 9 17l4-6z" fill="#4a9c57"/><path d="M9 5h7a8 8 0 0 1-7 12l4-7z" fill="#eec244"/><circle cx="9" cy="9" r="4" fill="#fff"/><circle cx="9" cy="9" r="3" fill="#4a80c8"/></svg></button>
    <button class="task current"><svg viewBox="0 0 18 18"><path d="M1 3l3-3h11l2 3v8H1z" fill="#bd2433"/><path d="M1 10h16v8H1z" fill="#1d1010"/><text x="9" y="9" class="mini">SW</text><text x="9" y="17" class="mini">2020</text></svg>SOLIDWORKS Premiu...</button>
    <div class="tray">
      <button aria-label="Hidden icons"><svg viewBox="0 0 18 18"><path d="M3 12l6-6 6 6" fill="none" stroke="#eee" stroke-width="1.400"/></svg></button>
      <button aria-label="Network"><svg viewBox="0 0 18 18"><g fill="none" stroke="#ddd" stroke-width="1.300"><path d="M3 16C3 8 8 3 16 3M6 16C6 10 10 6 16 6M10 16c0-4 2-6 6-6"/></g><circle cx="14" cy="15" r="1.800" fill="#eee"/></svg></button>
      <button aria-label="Battery"><svg viewBox="0 0 20 18"><path d="M8 6h10v8H6v-3M18 8h2v4h-2M1 3v3h5V3M2 1v2M5 1v2M3.500 6v5H7" fill="none" stroke="#eee" stroke-width="1.300"/></svg></button>
      <button aria-label="Volume"><svg viewBox="0 0 18 18"><path d="M1 7h3l4-4v12l-4-4H1zM11 6c2 2 2 4 0 6M13 4c3 3 3 7 0 10M15 2c4 4 4 10 0 14" fill="none" stroke="#eee" stroke-width="1.200"/></svg></button>
      <span class="lang">ENG</span><time>10:52 PM</time>
    </div>
  </div>
</div>
</body>
</html>
```

FILE: styles.css
```css
* { box-sizing: border-box; }
body { margin: 0; font: 11px/13px "Open Sans", "Noto Sans", sans-serif; color: #111; }
button { margin: 0; padding: 0; border: 0; background: none; font: inherit; color: inherit; }
svg { display: block; flex: none; }
ul { margin: 0; padding: 0; list-style: none; }
.sprite { position: absolute; width: 0; height: 0; }
.app { min-height: 100vh; display: flex; flex-direction: column; background: #f7f7f7; overflow: hidden; }

/* Title bar */
.titlebar { height: 32px; display: flex; align-items: center; border-bottom: 1px solid #888; flex: none; }
.logo { align-self: flex-start; z-index: 1; width: 145px; height: 35px; margin-left: 10px; padding-left: 5px; display: flex; align-items: center; border: 1px solid #999; border-top: 0; background: linear-gradient(#fff, #f5f2f2 60%, #ddd9da); color: #b4443b; }
.logo-mark { width: 29px; height: 30px; }
.logo-text { font: italic 16px/20px Lato, sans-serif; margin: 5px 0 0 6px; }
.expand { width: 21px; height: 31px; display: flex; align-items: center; justify-content: center; border-right: 1px solid #999; }
.expand svg { width: 8px; height: 14px; }
.quick { display: flex; align-items: center; margin-left: 29px; }
.tool { width: 26px; height: 24px; display: flex; align-items: center; justify-content: center; }
.tool svg { width: 18px; height: 18px; }
.drop { width: 14px; height: 24px; display: flex; align-items: center; justify-content: center; }
.drop::before, .caret { content: ""; display: block; border: 3px solid transparent; border-top: 4px solid #333; border-bottom: 0; }
.split { display: flex; border: 1px solid #888; }
.pressed { background: #b4b4b4; }
.split .drop { width: 12px; }
.doc-title { margin: 0 auto; font: inherit; }
.search { width: 201px; height: 23px; display: flex; align-items: center; border: 1px solid #222; background: #eeeef3; padding-left: 5px; }
.prompt { width: 15px; height: 15px; }
.search input { flex: 1; min-width: 0; margin-left: 6px; padding: 0; border: 0; background: none; font: inherit; }
.search input::placeholder { color: #666; }
.lens { width: 17px; height: 17px; }
.window-tools { display: flex; margin-left: 4px; }
.window-tools .tool svg { width: 17px; height: 17px; }
.window-tools .help { font-size: 18px; font-weight: 700; }

/* Ribbon */
.ribbon { height: 86px; flex: none; display: flex; padding: 5px 0 2px 6px; border-bottom: 1px solid #888; }
.group { display: flex; border-right: 1px solid #ccc; }
.big { display: flex; flex-direction: column; align-items: center; padding-top: 6px; height: 78px; text-align: center; position: relative; }
.big.low { padding-top: 13px; }
.big svg { width: 19px; height: 19px; }
.big .caret { position: absolute; bottom: 9px; }
.w34 { width: 34px; }
.w48 { width: 48px; }
.w54 { width: 54px; }
.w60 { width: 60px; }
.stack { display: flex; flex-direction: column; margin-top: -1px; padding-left: 3px; }
.stack button { height: 26px; display: flex; align-items: center; gap: 6px; white-space: nowrap; }
.stack svg { width: 19px; height: 19px; }
.boss { width: 262px; }
.cuts { width: 270px; padding-left: 2px; }
.mods { width: 230px; }
.stack.narrow { width: 64px; padding-left: 2px; }
.refs { width: 108px; padding-left: 2px; border: 0; }
.instant { background: #b2b2b2; border: 1px solid #777; margin-left: 1px; }

/* Tabs and view tools */
.strip { height: 23px; flex: none; display: flex; background: #fff; }
.tabs { display: flex; height: 22px; font-size: 12px; }
.tab { padding: 0 7px; border: 1px solid #999; border-width: 0 1px 1px 0; background: #d6d6d6; }
.tab.active { background: #f7f7f7; font-weight: 600; border-bottom: 0; }
.viewbar, .doc-tools { display: flex; height: 24px; padding-top: 3px; }
.viewbar { margin: 0 auto; }
.viewbar .drop::before { border-top-color: #999; }
.doc-tools { padding: 3px 7px 0 24px; color: #999; }
.doc-tools svg { width: 16px; height: 16px; }

/* Feature tree */
.work { flex: 1; display: flex; min-height: 0; }
.panel { position: relative; width: 120px; flex: none; display: flex; flex-direction: column; border-right: 1px solid #888; border-left: 1px solid #bbb; }
.grip { height: 16px; margin: 3px 2px 0 0; display: flex; align-items: center; justify-content: center; border: 1px solid #ddd; }
.grip i, .flyout i { width: 6px; height: 6px; border-radius: 50%; background: #ccc; border: 1px solid #aaa; }
.ptabs { display: flex; height: 26px; margin: 4px 2px 0 0; border-top: 1px solid #999; background: #d6d6d6; }
.ptab { width: 40px; display: flex; align-items: center; justify-content: center; border-right: 1px solid #999; }
.ptab.active { background: #f7f7f7; }
.ptab svg { width: 18px; height: 18px; }
.spin { display: flex; flex: 1; align-self: flex-end; height: 19px; }
.spin button { flex: 1; display: flex; align-items: center; justify-content: center; background: #fff; border: 1px solid #bbb; }
.spin svg { width: 6px; height: 8px; }
.filter { height: 27px; margin: 0 5px 0 4px; padding-left: 3px; display: flex; align-items: center; border: 1px solid #ccc; border-bottom: 0; }
.filter svg { width: 17px; height: 18px; }
.tree { margin-right: 2px; border-bottom: 3px solid #5b8299; font: 12px/16px Roboto, "Open Sans", sans-serif; }
.tree li { height: 22px; padding-left: 25px; display: flex; align-items: center; gap: 5px; white-space: nowrap; overflow: hidden; position: relative; }
.tree svg { width: 18px; height: 18px; }
.tree .root { padding-left: 3px; gap: 4px; background: #a9c6e2; border: 1px solid #668fae; border-right: 0; }
.more::before { content: ""; position: absolute; left: 9px; border: 4px solid transparent; border-left: 5px solid #666; border-right: 0; }
.hscroll { margin: auto 4px 6px 0; height: 15px; display: flex; justify-content: space-between; background: #f0f0f0; }
.hscroll button { width: 17px; display: flex; align-items: center; justify-content: center; }
.hscroll svg { width: 8px; height: 10px; fill: none; stroke: #444; stroke-width: 1.5; }
.thumb { width: 36px; margin-right: auto; background: #cdcdcd; }
.flyout { position: absolute; left: 118px; top: 316px; width: 9px; height: 39px; display: flex; align-items: center; justify-content: center; background: #f7f7f7; border: 1px solid #888; border-left: 0; z-index: 1; }

/* Graphics area */
.canvas { position: relative; flex: 1; min-width: 0; background: #fff; overflow: hidden; }
.model { width: 1480px; height: 695px; }
.foil path { fill: #acaecb; stroke: #15156b; stroke-width: 1.3; }
.gull { fill: none; stroke: #000; stroke-width: 2.2; shape-rendering: crispEdges; }
.caption { font: bold 27px "Liberation Serif", serif; fill: #111; }
.triad text { font: 11px "Liberation Sans", sans-serif; }
.view-name { font: 14px "DejaVu Sans", sans-serif; }
.wings { position: absolute; right: 74px; top: 42px; width: 452px; height: 466px; table-layout: fixed; border-collapse: collapse; font: 14px/18px "DejaVu Serif", "Liberation Serif", serif; }
.wings th, .wings td { height: 38px; border: 2px solid #ccc; padding: 1px 0 0 6px; text-align: left; font-weight: 400; }
.wings td:last-child { font-size: 13px; }
.wings th { font-weight: 700; font-size: 13px; }
.head { display: flex; justify-content: space-between; padding-right: 3px; white-space: nowrap; }
.head span { font: 16px/18px "Liberation Serif", serif; padding-top: 9px; margin-bottom: -9px; }
.wings a { color: #367d8f; text-decoration: none; border-bottom: 2px solid #367d8f; }
.wings .unknown { padding-left: 12px; }
.watermark { position: absolute; left: 358px; top: 261px; display: flex; align-items: baseline; gap: 3px; white-space: nowrap; color: #fff; line-height: 80px; text-shadow: 1px 1px 1px #777; pointer-events: none; }
.wm-han { font-family: "Noto Sans CJK SC", sans-serif; font-size: 65px; font-weight: 300; }
.wm-url { font-family: "Liberation Mono", monospace; font-size: 50px; }
.taskpane { position: absolute; right: 0; top: 27px; width: 26px; border: 1px solid #999; border-right: 0; background: #d3d3d3; }
.taskpane button { width: 25px; height: 24px; display: flex; align-items: center; justify-content: center; border-bottom: 1px solid #999; }
.taskpane button:last-child { border-bottom: 0; }
.taskpane .on { background: #f7f7f7; }
.taskpane svg { width: 18px; height: 18px; }

/* Sheet tabs */
.sheets { height: 16px; flex: none; display: flex; border-top: 1px solid #888; border-bottom: 1px solid #888; font-size: 12px; }
.steps { display: flex; width: 67px; background: #999; }
.steps button { flex: 1; display: flex; align-items: center; justify-content: center; border: 1px solid #888; }
.steps svg { width: 10px; height: 10px; fill: #777; stroke: #777; }
.sheet { padding: 0 9px; background: #d6d6d6; border-right: 1px solid #999; }
.sheet.active { padding: 0 7px 0 11px; background: #f7f7f7; font-weight: 700; }
.sheet.wide { padding-right: 14px; }

/* Status bar */
.status { height: 18px; flex: none; display: flex; align-items: center; padding: 0 3px 0 1px; }
.editing { margin-left: auto; }
.warn { width: 17px; height: 17px; margin-left: 27px; }
.units { display: flex; align-items: center; gap: 26px; margin-left: 81px; }
.caret.up { border-top: 0; border-bottom: 4px solid #333; }
.tag { width: 17px; height: 15px; margin-left: 26px; }

/* Taskbar */
.taskbar { height: 30px; flex: none; display: flex; background: #202020; color: #fff; font-size: 12px; }
.app-icon { width: 37px; display: flex; align-items: center; justify-content: center; }
.app-icon svg, .task svg { width: 17px; height: 17px; }
.task { display: flex; align-items: center; gap: 4px; white-space: nowrap; border-bottom: 2px solid #76a9d6; }
.paint { width: 152px; margin: 0 5px; padding-left: 3px; }
.current { width: 160px; padding-left: 7px; background: #5c5c5c; }
.mini { font: bold 7px "Liberation Sans", sans-serif; fill: #fff; text-anchor: middle; }
.tray { margin-left: auto; display: flex; align-items: center; padding-right: 4px; }
.tray button { width: 24px; display: flex; justify-content: center; }
.tray svg { width: 18px; height: 18px; }
.lang { margin-left: 6px; }
.tray time { margin-left: 10px; padding-right: 6px; border-right: 1px solid #666; line-height: 30px; }
```
